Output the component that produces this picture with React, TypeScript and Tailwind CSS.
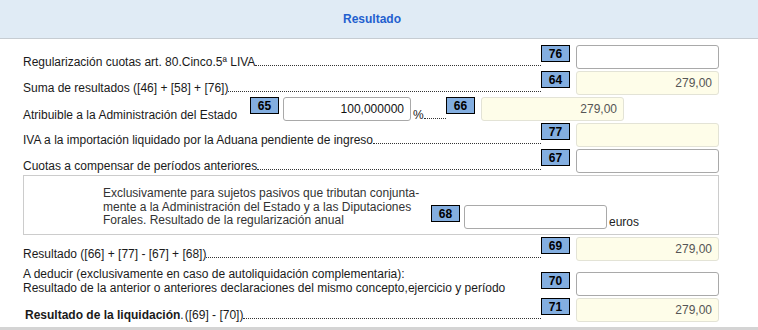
import type { ReactNode } from "react";

// Casilla numerada (fondo azul, borde negro)
function Num({ n }: { n: string }) {
  return (
    <div className="w-[29px] h-[17px] shrink-0 bg-[#83aee0] border border-black flex items-center justify-center text-[12px] font-bold leading-none text-black">
      {n}
    </div>
  );
}

function Field({
  value = "",
  filled = false,
  narrow = false,
  dark = false,
}: {
  value?: string;
  filled?: boolean;
  narrow?: boolean;
  dark?: boolean;
}) {
  return (
    <div
      className={`h-[24px] shrink-0 rounded-[3px] border flex items-center justify-end pr-[6px] text-[12px] ${
        narrow ? "w-[128px]" : "w-[143px]"
      } ${filled ? "bg-[#fefde9] border-[#e3e3d6]" : "bg-white border-[#a9a9a9]"} ${
        dark ? "text-[#111]" : "text-[#555]"
      }`}
    >
      {value}
    </div>
  );
}

function Dots() {
  return <div className="flex-1 border-b border-dotted border-[#333]" />;
}

function Row({ label, n, value, filled }: { label: ReactNode; n: string; value?: string; filled?: boolean }) {
  return (
    <div className="flex h-[26px]">
      <div className="flex-1 flex items-end pb-[2px]">
        <div className="flex-1 flex items-baseline leading-[14px]">
          <span className="whitespace-nowrap">{label}</span>
          <Dots />
        </div>
      </div>
      <Num n={n} />
      <div className="w-[6px] shrink-0" />
      <Field value={value} filled={filled} />
    </div>
  );
}

export default function App() {
  return (
    <div className="w-[758px] h-[330px] bg-white flex flex-col font-['Liberation_Sans',Arial,sans-serif] text-[12px] text-[#1a1a1a] overflow-hidden">
      <div className="h-[39px] shrink-0 bg-[#e0ebf5] border-b border-[#c6ccd2] flex items-center justify-center pr-[14px]">
        <span className="font-bold text-[12px] text-[#1f5fcf]">Resultado</span>
      </div>

      <div className="pl-[23px] pr-[39px] pt-[6px] flex flex-col">
        <Row label="Regularización cuotas art. 80.Cinco.5ª LIVA" n="76" />
        <Row label="Suma de resultados ([46] + [58] + [76])" n="64" value="279,00" filled />

        <div className="flex h-[26px]">
          <div className="w-[227px] shrink-0 flex items-end pb-[1px] leading-[14px]">
            <span className="whitespace-nowrap">Atribuible a la Administración del Estado</span>
          </div>
          <Num n="65" />
          <div className="w-[4px] shrink-0" />
          <Field value="100,000000" narrow dark />
          <div className="w-[35px] shrink-0 flex items-end pb-[1px]">
            <div className="flex-1 flex items-baseline leading-[14px] pl-[2px]">
              <span>%</span>
              <Dots />
            </div>
          </div>
          <Num n="66" />
          <div className="w-[6px] shrink-0" />
          <Field value="279,00" filled />
        </div>

        <Row label="IVA a la importación liquidado por la Aduana pendiente de ingreso" n="77" filled />
        <Row label="Cuotas a compensar de períodos anteriores" n="67" />

        <div className="h-[60px] border border-[#cccccc] flex items-start pl-[79px] pt-[11px] text-[#333]">
          <div className="w-[328px] shrink-0 leading-[13.5px]">
            Exclusivamente para sujetos pasivos que tributan conjunta-
            <br />
            mente a la Administración del Estado y a las Diputaciones
            <br />
            Forales. Resultado de la regularización anual
          </div>
          <div className="mt-[18px] flex items-start">
            <Num n="68" />
            <div className="w-[4px] shrink-0" />
            <Field />
            <span className="self-end ml-[2px] leading-[14px] text-[#222]">euros</span>
          </div>
        </div>

        <div className="h-[2px]" />
        <Row label="Resultado ([66] + [77] - [67] + [68])" n="69" value="279,00" filled />

        <div className="flex h-[35px]">
          <div className="flex-1 pt-[5px] leading-[13.5px]">
            A deducir (exclusivamente en caso de autoliquidación complementaria):
            <br />
            Resultado de la anterior o anteriores declaraciones del mismo concepto,ejercicio y período
          </div>
          <div className="flex items-start pt-[9px]">
            <Num n="70" />
            <div className="w-[6px] shrink-0" />
            <Field />
          </div>
        </div>

        <Row
          label={
            <span className="ml-[2px]">
              <span className="font-bold">Resultado de la liquidación</span>
              <span className="tracking-[1px]">.</span>
              ([69] - [70])
            </span>
          }
          n="71"
          value="279,00"
          filled
        />
      </div>

      <div className="mt-auto h-[3px] shrink-0 bg-[#d4d4d4]" />
    </div>
  );
}
